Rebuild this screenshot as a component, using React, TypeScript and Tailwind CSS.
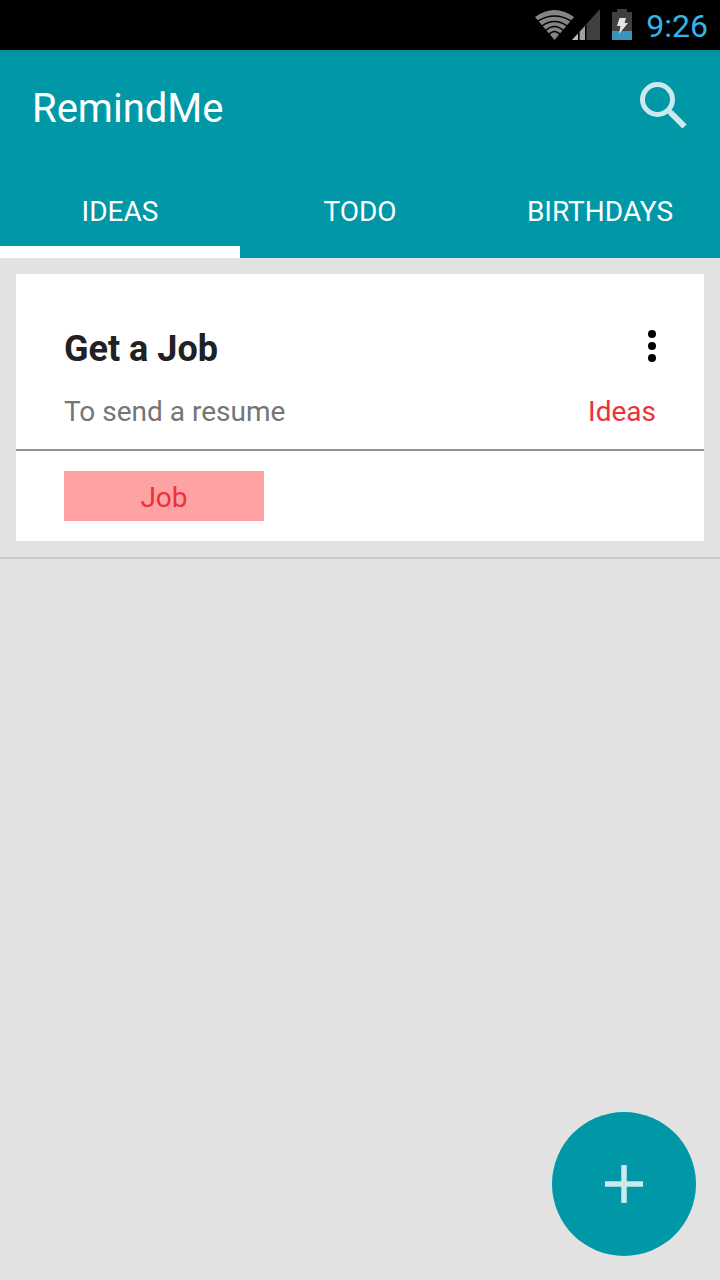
const tabs = ["IDEAS", "TODO", "BIRTHDAYS"];

function StatusIcons() {
  return (
    <svg className="h-[50px] w-[100px]" viewBox="0 0 100 50" aria-hidden="true">
      <path d="M2 17Q21.500 3 41 17L21.500 40Z" fill="#858585" />
      <g fill="none" stroke="#000" strokeWidth="1.500">
        <path d="M4 21.500Q21.500 10.500 39 21.500" />
        <path d="M8 26.500Q21.500 16.500 35 26.500" />
        <path d="M12 31Q21.500 22 31 31" />
        <path d="M15.500 35Q21.500 28 27.500 35" />
      </g>
      <path d="M39 40L67 9V40Z" fill="#404040" />
      <path d="M39 40L45 33.500V40Z" fill="#bdbdbd" />
      <path d="M46.500 40V32L52 26V40Z" fill="#a0a0a0" />
      <path d="M45 33.500L46.500 32V40H45ZM52 26L53.500 24.500V40H52Z" fill="#000" />
      <path d="M84 9h10v3h5v28H79V12h5Z" fill="#404040" />
      <path d="M79 31h20v9H79Z" fill="#3a94bd" />
      <path d="M86.500 18h6.500l-1.500 5h3.500l-9 11 1.500-8h-3.500Z" fill="#e4e4e4" />
    </svg>
  );
}

export default function App() {
  return (
    <div className="flex min-h-screen flex-col bg-[#e2e2e2] font-['Roboto',sans-serif]">
      <div className="flex h-[50px] shrink-0 items-center justify-end gap-[13px] bg-black pr-3 text-[#33b5e5]">
        <StatusIcons />
        <time className="pt-px text-[32px] leading-[50px]">9:26</time>
      </div>
      <header className="bg-[#0097a7] bg-linear-to-b from-[#008c9b] to-[#0097a7] to-[8px] text-white">
        <div className="flex h-28 items-center justify-between px-8">
          <h1 className="pt-1.5 text-[40px] leading-[48px]">RemindMe</h1>
          <button aria-label="Search">
            <svg className="size-12" viewBox="0 0 48 48" fill="none" stroke="#cceaed" strokeWidth="5">
              <circle cx="17.500" cy="17.500" r="15" />
              <path d="M30.500 30.500L44.500 44.500" strokeWidth="6" />
              <path d="M28 28L32 32" strokeWidth="5" />
            </svg>
          </button>
        </div>
        <nav className="grid h-24 grid-cols-3">
          {tabs.map((tab) => (
            <button
              key={tab}
              aria-current={tab === "IDEAS" ? "page" : undefined}
              className="border-b-12 border-transparent pt-4 text-[28px] leading-8 aria-[current=page]:border-white"
            >
              {tab}
            </button>
          ))}
        </nav>
      </header>
      <main className="border-b-2 border-[#c9c9c9] p-4">
        <article className="bg-white">
          <div className="border-b-2 border-[#919191] px-12 pt-12 pb-[17px]">
            <div className="flex items-center justify-between">
              <h2 className="text-[36px] leading-[54px] font-bold text-[#212121]">Get a Job</h2>
              <button aria-label="More options" className="-mr-2 pb-1.5">
                <svg className="h-12 w-6" viewBox="0 0 24 48" fill="#000">
                  <circle cx="12" cy="12" r="4" />
                  <circle cx="12" cy="24" r="4" />
                  <circle cx="12" cy="36" r="4" />
                </svg>
              </button>
            </div>
            <div className="flex justify-between pt-4 text-[28px] leading-[40px]">
              <p className="text-[#757575]">To send a resume</p>
              <p className="text-[#ea3238]">Ideas</p>
            </div>
          </div>
          <div className="px-12 py-5">
            <p className="w-[200px] bg-[#ffa2a4] pt-1 text-center text-[28px] leading-[46px] text-[#ea3238]">Job</p>
          </div>
        </article>
      </main>
      <button
        aria-label="Add reminder"
        className="fixed right-6 bottom-6 flex size-36 items-center justify-center rounded-full bg-[#0097a7]"
      >
        <svg className="size-12" viewBox="0 0 48 48" fill="none" stroke="#cceaed" strokeWidth="5.500">
          <path d="M5 24H43M24 5V43" />
        </svg>
      </button>
    </div>
  );
}
